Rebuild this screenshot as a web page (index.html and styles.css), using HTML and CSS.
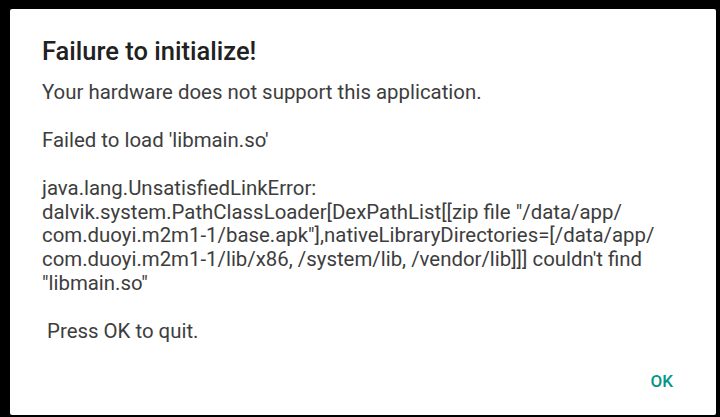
FILE: index.html
```html
<!DOCTYPE html>
<html>
<head>
<meta charset="utf-8">
<link rel="stylesheet" href="styles.css">
</head>
<body>
<div class="dialog">
  <h1 class="title">Failure to initialize!</h1>
  <div class="message">Your hardware does not support this application.

Failed to load 'libmain.so'

java.lang.UnsatisfiedLinkError:
dalvik.system.PathClassLoader[DexPathList[[zip file "/data/app/
com.duoyi.m2m1-1/base.apk"],nativeLibraryDirectories=[/data/app/
com.duoyi.m2m1-1/lib/x86, /system/lib, /vendor/lib]]] couldn't find
"libmain.so"

 Press OK to quit.</div>
  <div class="actions">
    <button class="btn">OK</button>
  </div>
</div>
</body>
</html>
```
FILE: styles.css
```css
html, body {
  margin: 0;
  padding: 0;
  background: #000;
  width: 720px;
  height: 417px;
  overflow: hidden;
}
body {
  padding: 9px 4px 2px 10px;
  box-sizing: border-box;
}
.dialog {
  background: #fff;
  width: 706px;
  height: 406px;
  border-radius: 2px;
  box-sizing: border-box;
  padding: 28px 32px 0 32px;
  display: flex;
  flex-direction: column;
  font-family: Roboto, "Noto Sans", sans-serif;
}
.title {
  margin: 0;
  font-size: 25.5px;
  line-height: 28px;
  font-weight: 500;
  color: #212121;
}
.message {
  margin-top: 16px;
  font-size: 20.4px;
  line-height: 23.9px;
  color: #3d3d3d;
  white-space: pre-wrap;
}
.actions {
  display: flex;
  justify-content: flex-end;
  margin-top: 27px;
  padding-right: 11px;
}
.btn {
  border: 0;
  background: transparent;
  padding: 0;
  margin: 0;
  font-family: Roboto, "Noto Sans", sans-serif;
  font-size: 17px;
  line-height: 20px;
  font-weight: 500;
  color: #009688;
}
```
